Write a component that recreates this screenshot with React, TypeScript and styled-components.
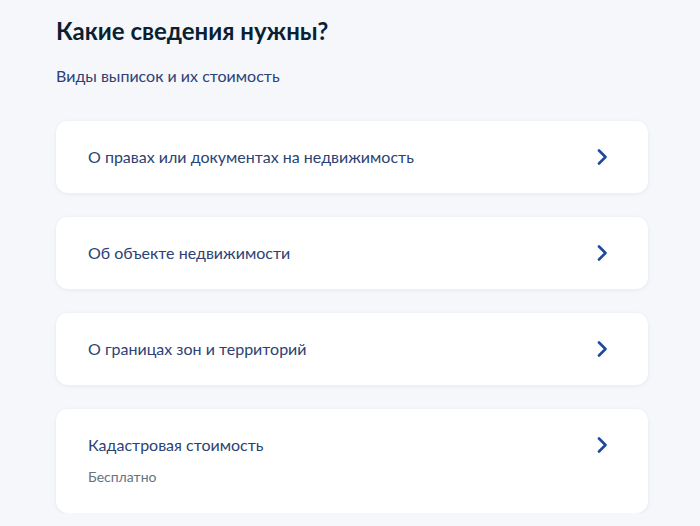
import React from 'react'
import styled, { createGlobalStyle } from 'styled-components'

const Global = createGlobalStyle`
  html, body {
    margin: 0;
    padding: 0;
    background: #f5f7fb;
    font-family: Lato, "Noto Sans", sans-serif;
  }
`

const items = [
  { title: 'О правах или документах на недвижимость' },
  { title: 'Об объекте недвижимости' },
  { title: 'О границах зон и территорий' },
  { title: 'Кадастровая стоимость', note: 'Бесплатно' },
]

const Chevron = () => (
  <svg width="12" height="16" viewBox="0 0 12 16" fill="none">
    <path d="M3 1.5L9.5 8L3 14.5" stroke="#1f4a9c" strokeWidth="2.6" strokeLinecap="round" strokeLinejoin="round" />
  </svg>
)

const App = () => {
  return (
    <Page>
      <Global />
      <Title>Какие сведения нужны?</Title>
      <SubTitle>Виды выписок и их стоимость</SubTitle>
      <List>
        {items.map((it) => (
          <Card key={it.title}>
            <CardText>
              <CardTitle>{it.title}</CardTitle>
              {it.note && <Note>{it.note}</Note>}
            </CardText>
            <Arrow>
              <Chevron />
            </Arrow>
          </Card>
        ))}
      </List>
    </Page>
  )
}

export default App

const Page = styled.div`
  width: 592px;
  padding: 15px 0 0 56px;
`

const Title = styled.h1`
  margin: 0;
  font-size: 24px;
  line-height: 32px;
  font-weight: 700;
  color: #0b1f33;
`

const SubTitle = styled.p`
  margin: 17px 0 0;
  font-size: 16px;
  line-height: 24px;
  color: #2c4275;
`

const List = styled.div`
  margin-top: 33px;
  display: flex;
  flex-direction: column;
  gap: 24px;
`

const Card = styled.div`
  display: flex;
  align-items: flex-start;
  justify-content: space-between;
  background: #fff;
  border-radius: 12px;
  padding: 24px 40px 24px 32px;
  box-shadow: 0 1px 4px rgba(30, 60, 120, 0.08);
`

const CardText = styled.div`
  display: flex;
  flex-direction: column;
  gap: 8px;
`

const CardTitle = styled.div`
  font-size: 16px;
  line-height: 24px;
  color: #2c4275;
`

const Note = styled.div`
  font-size: 14px;
  line-height: 24px;
  color: #66727f;
`

const Arrow = styled.div`
  height: 24px;
  display: flex;
  align-items: center;
`
